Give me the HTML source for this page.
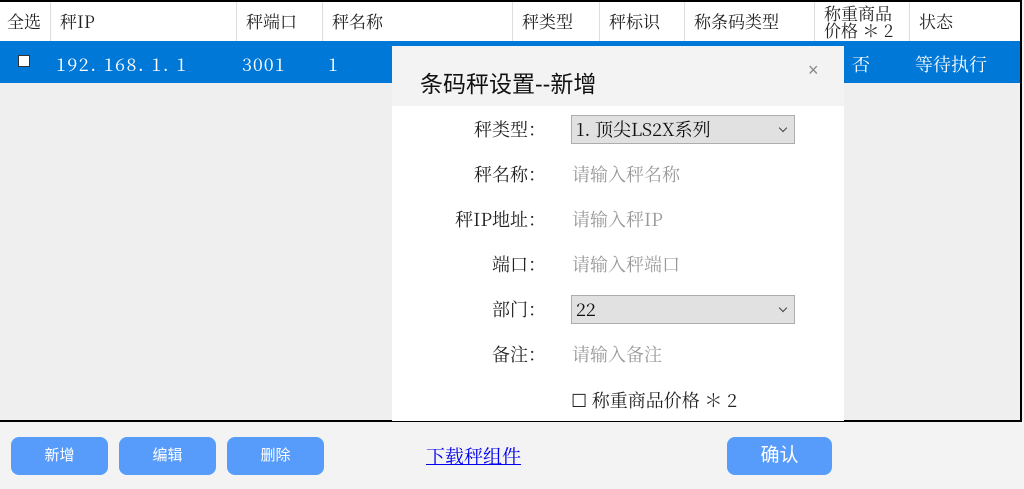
<!DOCTYPE html>
<html><head><meta charset="utf-8"><style>
*{margin:0;padding:0;box-sizing:border-box}
body{width:1024px;height:489px;position:relative;background:#f3f3f3;overflow:hidden;font-family:"Noto Serif CJK SC","Liberation Serif",serif;}
.abs{position:absolute}
.tbl{left:0;top:0;width:1022px;height:422px;background:#efefef;border-top:2px solid #000;border-right:2px solid #000;border-bottom:2px solid #000}
.hdr{left:0;top:2px;width:1020px;height:39px;background:#fff}
.h{position:absolute;top:0;height:39px;line-height:37px;font-size:17px;color:#222;border-left:1px solid #ddd;padding-left:9px}
.row{left:0;top:41px;width:1020px;height:42px;background:#0078d7;color:#fff;font-size:18px}
.row span{position:absolute;top:10px;line-height:26px}
.dlg{left:392px;top:46px;width:452px;height:375px;background:#fff}
.dh{left:392px;top:46px;width:452px;height:60px;background:#f3f3f3}
.lbl{position:absolute;right:478px;font-size:18px;line-height:24px;color:#222;text-align:right}
.ph{position:absolute;left:572px;font-size:18px;line-height:24px;color:#999}
.sel{position:absolute;left:571px;width:224px;height:29px;background:#e1e1e1;border:1px solid #adadad;font-size:18px;color:#111;padding-left:4px;line-height:27px}
.sel:after{content:"";position:absolute;right:8px;top:9px;width:5px;height:5px;border-right:1px solid #444;border-bottom:1px solid #444;transform:rotate(45deg)}
.btn{position:absolute;top:437px;height:38px;background:#589cfb;color:#fff;border-radius:8px;font-family:"Liberation Sans","Noto Sans CJK SC",sans-serif;font-size:15px;text-align:center;line-height:38px}
</style></head><body>
<div class="abs tbl"></div>
<div class="abs hdr">
<div class="h" style="left:0;border:none;padding-left:7px">全选</div>
<div class="h" style="left:50px">秤IP</div>
<div class="h" style="left:236px">秤端口</div>
<div class="h" style="left:322px">秤名称</div>
<div class="h" style="left:512px">秤类型</div>
<div class="h" style="left:599px">秤标识</div>
<div class="h" style="left:684px">称条码类型</div>
<div class="h" style="left:814px;line-height:17px;padding-top:2px">称重商品<br>价格 ＊ 2</div>
<div class="h" style="left:909px">状态</div>
</div>
<div class="abs row">
<div style="position:absolute;left:18px;top:14px;width:12px;height:12px;background:#fff;border:1px solid #333"></div>
<span style="left:56px;letter-spacing:1.5px">192. 168. 1. 1</span>
<span style="left:242px;letter-spacing:1px">3001</span>
<span style="left:328px">1</span>
<span style="left:852px">否</span>
<span style="left:915px">等待执行</span>
</div>
<div class="abs dlg"></div>
<div class="abs dh"></div>
<div class="abs" style="left:420px;top:65px;font-family:'Liberation Sans','Noto Sans CJK SC',sans-serif;font-size:23px;color:#111">条码秤设置--新增</div>
<div class="abs" style="left:808px;top:60px;font-family:'Liberation Sans',sans-serif;font-size:18px;color:#888">×</div>
<div class="lbl" style="top:117px">秤类型：</div>
<div class="sel" style="top:115px">1. 顶尖LS2X系列</div>
<div class="lbl" style="top:162px">秤名称：</div>
<div class="ph" style="top:162px">请输入秤名称</div>
<div class="lbl" style="top:207px">秤IP地址：</div>
<div class="ph" style="top:207px">请输入秤IP</div>
<div class="lbl" style="top:252px">端口：</div>
<div class="ph" style="top:252px">请输入秤端口</div>
<div class="lbl" style="top:297px">部门：</div>
<div class="sel" style="top:295px">22</div>
<div class="lbl" style="top:342px">备注：</div>
<div class="ph" style="top:342px">请输入备注</div>
<div class="abs" style="left:571px;top:388px;font-size:18px;line-height:24px;color:#222">☐ 称重商品价格 ＊ 2</div>
<div class="btn" style="left:11px;width:97px">新增</div>
<div class="btn" style="left:119px;width:97px">编辑</div>
<div class="btn" style="left:227px;width:97px">删除</div>
<div class="abs" style="left:426px;top:443px;font-size:19px;line-height:26px;color:#00e;text-decoration:underline">下载秤组件</div>
<div class="btn" style="left:727px;width:105px;font-size:19px">确认</div>
</body></html>
